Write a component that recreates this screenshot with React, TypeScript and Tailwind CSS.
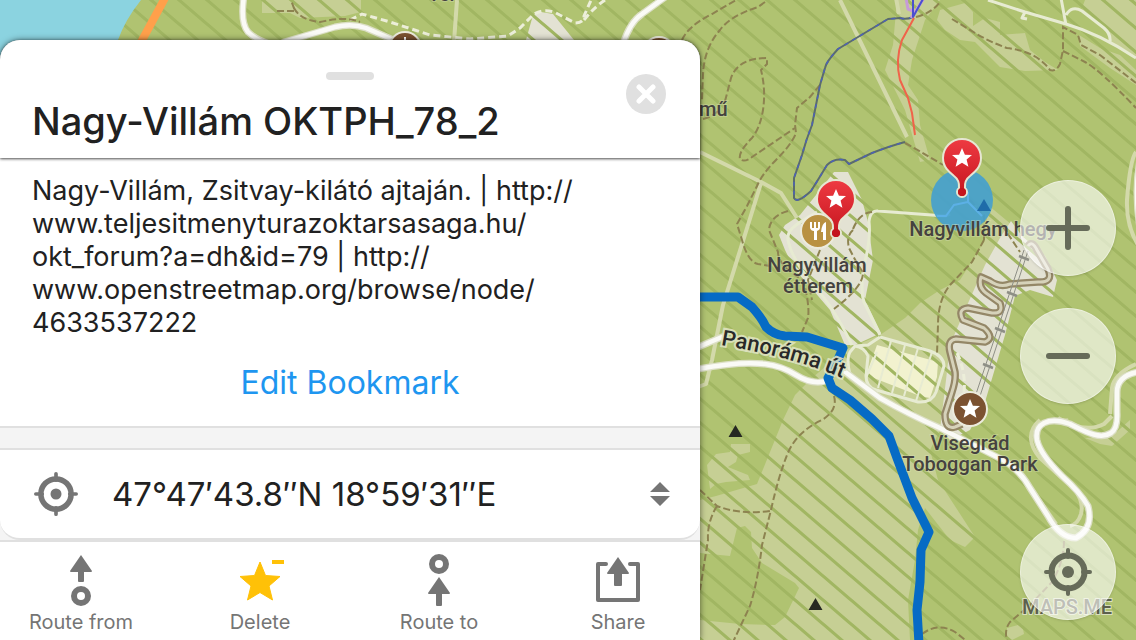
import type { ReactNode } from "react";

const STAR = "M0 -10L2.9 -3.2L10 -3L4.6 1.6L6.4 8.8L0 4.8L-6.4 8.8L-4.6 1.6L-10 -3L-2.9 -3.2Z";

const TRAIL =
  "M913 17Q906 20 900 18L888 19L838 49Q826 62 825 68L820 85L816 105L812 125Q806 140 802 155L794 178V198Q797 204 811 191Q818 180 827 165Q834 158 845 160L849 164L872 153Q890 146 905 142";

const SLIDE =
  "M1028 246Q1032 240 1037 250L1048 269Q1054 283 1038 282L1010 284Q1000 288 990 281L981 277Q978 287 986 293L1000 303Q1004 314 992 313L968 308Q957 309 963 320L984 328Q995 338 985 342L956 339Q947 340 950 352L955 372Q956 380 952 392L945 414Q945 430 955 427L962 424";

function Pin({ x, y }: { x: number; y: number }) {
  return (
    <g transform={`translate(${x} ${y})`}>
      <path
        d="M0 -19A19 19 0 0 0 -19 0C-19 9 -13 14 -8 18C-4 21 -2.5 25 -3 30A5 5 0 1 0 3 30C2.5 25 4 21 8 18C13 14 19 9 19 0A19 19 0 0 0 0 -19Z"
        fill="url(#pin)"
        stroke="#e6e6d2"
        strokeWidth="2"
      />
      <circle cy="34" r="4" fill="#c4141d" />
      <path d={STAR} fill="#fff" />
    </g>
  );
}

function MapCanvas() {
  return (
    <svg
      className="absolute inset-0 h-full w-full"
      viewBox="0 0 1136 640"
      preserveAspectRatio="xMinYMin slice"
      role="img"
      aria-label="Map of Nagy-Villám"
    >
      <defs>
        <pattern id="stripes" width="28" height="24" patternUnits="userSpaceOnUse" x="11">
          <path d="M-28 -24L56 48M-28 0L28 48M0 -24L56 24" stroke="#a1b662" strokeWidth="3.2" />
        </pattern>
        <linearGradient id="pin" x1="0" y1="0" x2="0" y2="1">
          <stop offset="0" stopColor="#ee3a42" />
          <stop offset="1" stopColor="#c4141d" />
        </linearGradient>
        <path id="street" d="M721 345C755 351 805 360 860 386" />
      </defs>
      <rect width="1136" height="640" fill="#b0c371" />

      <g fill="#c6cf94">
        <path d="M262 0H361V12L345 16L300 18L290 13L262 13Z" />
        <path d="M716 496L757 484L783 420L795 395L812 378L845 350L880 335L905 318L920 303L940 290L960 280L985 240L988 205L1012 225L990 300L950 350L945 400L940 430L930 450L938 480L975 537L965 547L950 540L925 508L918 530L915 560L908 600L910 640H700V500Z" />
        <path d="M707 465L716 454L730 452L731 444L750 444L750 452L738 455L736 462L728 467L748 475L750 480L726 482L716 484L710 489Z" />
        <path d="M940 10L965 3L973 12L973 26L985 18L1000 22V35L1025 33L1030 50L1045 62L1058 70L1025 71L1000 67L988 55L975 42L960 40L945 30L937 20Z" />
        <path d="M1085 0H1136V56L1110 42L1108 30L1082 8Z" />
        <path d="M1079 35L1100 48L1120 55L1136 70V85L1110 68L1080 46Z" />
        <path d="M897 0H940L925 20L912 60L908 85L918 100L920 125L930 160L920 162L905 110L885 70L893 45Z" />
        <path d="M1040 420L1068 418L1070 426L1050 424ZM1085 438L1112 436L1130 420V430L1112 446L1100 444Z" />
        <path d="M1007 628L1022 624L1024 634L1012 640H1007Z" />
      </g>
      <path
        d="M700 553L730 556L737 528L745 526L751 532L752 548L762 563L795 583L799 588L785 617L775 625L740 624L700 620Z"
        fill="#b0c371"
      />
      <g fill="#e3e2d3">
        <path d="M526 40L533 15L541 12L553 14L574 40Z" />
        <path d="M834 172L848 172L862 200L868 222L873 260L865 300L881 333L855 345H845L830 310L813 290L795 270L785 250L779 235L785 225L800 215L820 190Z" />
        <path d="M1011 221L1022 236L1045 256L1057 280L1053 297L1030 290L1015 296L1005 335L985 402L970 430L950 440L940 430L946 380L950 345L965 310L985 265L1000 238Z" />
      </g>
      <path d="M877 345L938 362L937 377L930 398L920 396L866 375Z" fill="#f2f2cf" />
      <rect width="1136" height="640" fill="url(#stripes)" />

      <path d="M0 0H141Q125 20 118 40L100 60H0Z" fill="#8bd3e0" />
      <path d="M165 -2L140 44" stroke="#ffa04b" strokeWidth="8" />

      <g fill="none" stroke="#d3d9aa" strokeWidth="4" strokeLinejoin="round">
        <path d="M457 0L454 42M840 0L907 137M896 -2L899 14M700 152L761 182L781 193L797 218M761 183L748 225L723 305L712 360L706 384L698 387" />
        <path d="M1136 152Q1130 160 1127 200Q1126 225 1138 245" />
        <path d="M1136 364Q1114 374 1112 388L1110 414M1040 420C1026 432 1030 446 1040 458L1075 490Q1084 502 1081 514Q1078 524 1070 526M1020 472L1038 498L1056 524M1058 418Q1085 434 1104 424L1112 416" />
      </g>
      <g fill="none" stroke="#e7ebd2" strokeWidth="3" strokeLinejoin="round">
        <path d="M988 0L1025 12L1066 24Q1100 34 1136 58M1061 -2L1066 25M1066 15Q1072 5 1082 11L1104 28Q1111 34 1110 42M1025 12L1022 18L1027 19" />
        <path d="M817 212C795 225 784 230 789 244Q793 260 815 288Q832 304 852 345M950 214L945 216L878 211Q870 210 869 222Q871 240 864 265Q860 290 864 302L880 335" />
        <path d="M880 337L930 351Q944 356 944 366L936 392Q932 403 918 402L876 390Q866 387 866 376L868 356Q864 347 855 346L850 352Q846 358 850 375M880 337L868 345L855 346" />
        <path d="M891 341L878 388M905 345L892 393M918 348L904 396M932 352L916 401M877 352L866 378" strokeWidth="2" />
      </g>

      <g fill="none" stroke="#dcdfc6" strokeWidth="7" strokeLinecap="round" strokeLinejoin="round">
        <path
          id="whiteRoads"
          d="M244 -4Q240 22 248 32Q256 40 270 44M284 42L335 27Q352 23 366 28L398 42M623 44Q630 22 642 14L664 -2M696 348L722 337M698 369Q740 361 765 364Q782 366 796 375Q812 385 826 381M840 368L880 398Q910 415 940 428L1003 460Q1020 470 1030 488L1048 516Q1060 538 1076 538Q1094 528 1088 506Q1080 492 1062 476Q1040 454 1037 440C1034 424 1048 416 1070 424C1086 432 1100 440 1111 433Q1118 428 1117 412V392Q1117 376 1138 372M1142 150Q1132 190 1142 240"
        />
        <path
          d="M244 -4Q240 22 248 32Q256 40 270 44M284 42L335 27Q352 23 366 28L398 42M623 44Q630 22 642 14L664 -2M696 348L722 337M698 369Q740 361 765 364Q782 366 796 375Q812 385 826 381M840 368L880 398Q910 415 940 428L1003 460Q1020 470 1030 488L1048 516Q1060 538 1076 538Q1094 528 1088 506Q1080 492 1062 476Q1040 454 1037 440C1034 424 1048 416 1070 424C1086 432 1100 440 1111 433Q1118 428 1117 412V392Q1117 376 1138 372M1142 150Q1132 190 1142 240"
          stroke="#fafaf6"
          strokeWidth="4.5"
        />
      </g>

      <g fill="none" stroke="#eceed9" strokeWidth="3" strokeDasharray="7 4">
        <path d="M350 20L362 14L390 22L430 35L470 39L508 36L520 28L534 14Q545 8 556 13L575 23Q584 23 584 16L592 -2M584 20Q595 6 608 -2" />
        <path d="M957 353Q966 372 964 392" />
      </g>
      <g fill="none" stroke="#8d8350" strokeWidth="2" strokeDasharray="7 3">
        <path d="M277 11H295L291 0M294 8Q300 20 320 22Q345 16 360 22M682 40Q688 26 712 14L738 -1M765 2L758 7Q730 16 720 30Q704 48 703 75L702 100" />
        <path d="M725 101Q728 90 731 78Q738 58 767 58V64L761 70Q766 90 763 110Q760 128 752 138Q738 152 740 159Q744 163 752 157L795 128M703 119Q712 117 718 111" />
        <path d="M820 85L810 97L797 108L795 125L796 133Q792 144 776 160Q762 174 757 186L747 206L737 224L742 240Q748 262 758 264L770 266M788 211Q770 216 769 230L778 252Q778 266 803 280Q810 305 808 318L802 332" />
        <path d="M853 230Q846 236 849 248Q858 266 863 272Q864 286 834 309M853 229Q860 212 873 212M820 250L808 280L812 300" />
        <path d="M952 19L975 33Q990 42 1007 48Q1024 50 1036 57Q1046 64 1050 70Q1056 72 1060 64L1063 50V27L1078 35L1081 45L1100 55L1136 83M1063 51L1085 62Q1100 70 1136 108M916 17Q932 13 940 2M905 143L916 149L943 165" />
        <path d="M984 240L972 262L950 285Q938 300 938 325L937 354M1002 225L1020 252M970 200L984 215V240" />
        <path d="M834 396Q838 410 822 420Q796 432 787 455Q778 478 771 510L762 545Q758 580 750 606L733 642M700 490L717 506Q740 515 770 511M717 506Q707 522 708 540L700 590" />
        <path d="M1064 541Q1064 562 1052 582L1030 605L1010 622Q1004 630 1007 640M922 634Q938 622 955 632L968 642" />
      </g>

      <g fill="none" strokeLinejoin="round">
        <path d={TRAIL} stroke="#5b6c6c" strokeWidth="2" />
        <path d={TRAIL} stroke="#4d62b4" strokeWidth="1.5" strokeDasharray="4 5" />
        <path d="M906 -2L908 9L915 12M911 18L924 -2" stroke="#c79bd8" strokeWidth="3" />
        <path d="M913 -2V17L923 -1" stroke="#4a4fd0" strokeWidth="2" />
        <path d="M914 18L902 40Q895 60 900 80L908 98L912 113L915 135" stroke="#f0634a" strokeWidth="2" />
      </g>

      <g fill="none" strokeLinejoin="round">
        <path d={SLIDE} stroke="#948767" strokeWidth="7.5" />
        <path d={SLIDE} stroke="#d6d2ba" strokeWidth="3" />
      </g>
      <g stroke="#8e8f86" strokeWidth="1">
        <path d="M1024 250L976 394M1028 251L980 396" />
        <path d="M1019 256L1029 260M1007 292L1017 296M995 328L1005 332M983 364L993 368" strokeWidth="2.5" />
      </g>

      <path
        d="M696 297H738L752 307Q762 318 766 327Q774 335 785 336L807 337L843 348L836 364L828 378L832 388L850 400L872 419L889 436L897 458L912 498L929 532L921 550L920 582L917 610L919 644"
        fill="none"
        stroke="#066bc5"
        strokeWidth="9"
        strokeLinejoin="round"
      />

      <circle cx="962" cy="200" r="31" fill="#45a1cd" fillOpacity="0.92" />
      <path d="M937 216H946L954 205L968 202V192M968 202L982 216" fill="none" stroke="#5cb0e6" strokeWidth="2" />
      <path d="M984 199L991 211H977Z" fill="#1f6ca9" />
      <path d="M735.5 425L742.5 437H728.500ZM815.500 598L822.500 610H808.500Z" fill="#262822" />

      <g stroke="#ecebdd" strokeWidth="2">
        <circle cx="405" cy="48" r="16" fill="#7b5231" />
        <circle cx="659" cy="53" r="16" fill="#7b5231" />
        <circle cx="818" cy="231" r="17" fill="#b99142" />
        <circle cx="970" cy="409" r="17" fill="#7b5231" />
      </g>
      <path d="M404 37H406V44H404Z" fill="#fff" />
      <path
        d="M810 222V228Q811 231 814 231V240H817V231Q820 230 820 228V222H818V228H816V222H814V228H812V222ZM826 222Q822 223 821 232H823V240H826Z"
        fill="#fff"
      />
      <path d={STAR} transform="translate(970 409)" fill="#fff" />

      <g
        fontFamily="Roboto, sans-serif"
        fontSize="20"
        fontWeight="500"
        fill="#45423f"
        stroke="#dfe3c2"
        strokeOpacity="0.35"
        strokeWidth="2"
        paintOrder="stroke"
      >
        <text x="429" y="1">ver</text>
        <text x="699" y="116">mű</text>
        <g textAnchor="middle">
          <text x="817" y="272">Nagyvillám</text>
          <text x="818" y="293">étterem</text>
          <text x="983" y="236">Nagyvillám hegy</text>
          <text x="970" y="450">Visegrád</text>
          <text x="970" y="471">Toboggan Park</text>
        </g>
        <text fontSize="22" fill="#292929" strokeOpacity="0.9" strokeWidth="4">
          <textPath href="#street">Panoráma út</textPath>
        </text>
        <text x="1022" y="614" fill="#5c604d" stroke="#e6e9d6" strokeOpacity="0.8">
          MAPS.ME
        </text>
      </g>
      <Pin x={836} y={199} />
      <Pin x={962} y={158} />
    </svg>
  );
}

function RoundButton({ label, className = "", children }: { label: string; className?: string; children: ReactNode }) {
  return (
    <button
      type="button"
      aria-label={label}
      className={`flex size-24 items-center justify-center rounded-full border border-white/40 bg-white/60 shadow-sm ${className}`}
    >
      {children}
    </button>
  );
}

function Target({ className }: { className: string }) {
  return (
    <svg viewBox="0 0 48 48" className={className} fill="none" stroke="currentColor" aria-hidden="true">
      <circle cx="24" cy="24" r="16.500" strokeWidth="6" />
      <circle cx="24" cy="24" r="6" fill="currentColor" stroke="none" />
      <path d="M24 2V9M24 39V46M2 24H9M39 24H46" strokeWidth="4" strokeLinecap="round" />
    </svg>
  );
}

function Action({ label, children }: { label: string; children: ReactNode }) {
  return (
    <button type="button" className="flex w-[146px] flex-col items-center gap-1">
      <svg viewBox="0 0 52 52" className="size-13" aria-hidden="true">
        {children}
      </svg>
      <span className="text-[20px] leading-6 whitespace-nowrap">{label}</span>
    </button>
  );
}

export default function App() {
  return (
    <main className="relative flex min-h-screen flex-col justify-end overflow-hidden font-['Inter',sans-serif] text-[#212121]">
      <MapCanvas />

      <section
        aria-label="Bookmark"
        className="relative w-[700px] max-w-full rounded-t-[20px] bg-[#f4f4f4] shadow-[0_0_6px_rgba(0,0,0,0.55)]"
      >
        <header className="relative flex flex-col rounded-t-[20px] bg-white px-8 pt-8 pb-3 shadow-[0_1px_3px_rgba(0,0,0,0.7)]">
          <span className="h-2 w-12 self-center rounded-full bg-[#e0e0e0]" />
          <div className="flex items-start justify-between">
            <h1 className="pt-4 text-[38px] leading-[50px] font-medium">Nagy-Villám OKTPH_78_2</h1>
            <button
              type="button"
              aria-label="Close"
              className="-mt-1.5 mr-0.5 flex size-10 items-center justify-center rounded-full bg-[#e0e0e0]"
            >
              <svg viewBox="0 0 20 20" className="size-5" aria-hidden="true">
                <path d="M3 3L17 17M17 3L3 17" stroke="#fff" strokeWidth="5" strokeLinecap="round" />
              </svg>
            </button>
          </div>
        </header>

        <div className="flex flex-col border-b-2 border-[#e0e0e0] bg-white px-8 pt-4 pb-6">
          <p className="text-[27px] leading-[33px]">
            Nagy-Villám, Zsitvay-kilátó ajtaján. |{" "}
            <a href="http://www.teljesitmenyturazoktarsasaga.hu/okt_forum?a=dh&id=79">
              http://
              <br />
              www.teljesitmenyturazoktarsasaga.hu/
              <br />
              okt_forum?a=dh&amp;id=79
            </a>{" "}
            |{" "}
            <a href="http://www.openstreetmap.org/browse/node/4633537222">
              http://
              <br />
              www.openstreetmap.org/browse/node/
              <br />
              4633537222
            </a>
          </p>
          <button type="button" className="mt-6 self-center text-[32px] leading-[39px] text-[#1e96f0]">
            Edit Bookmark
          </button>
        </div>

        <div className="mt-5 rounded-b-[20px] border-y-2 border-[#e0e0e0] bg-white">
          <button type="button" className="flex h-22 w-full items-center pr-7.5 pl-8.5">
            <Target className="size-11 text-[#757575]" />
            <span className="ml-8.5 text-[33px] leading-10">47°47′43.8″N 18°59′31″E</span>
            <svg viewBox="0 0 20 24" className="ml-auto h-6 w-5 text-[#757575]" aria-hidden="true">
              <path d="M10 0L20 10H0ZM10 24L20 14H0Z" fill="currentColor" />
            </svg>
          </button>
        </div>

        <nav className="flex justify-between border-t-2 border-[#e0e0e0] bg-white pt-3 pr-[9px] pb-1.5 pl-2 text-[#757575]">
          <Action label="Route from">
            <path d="M26 1L37 17Q37 18 36 18H29V27Q29 28 28 28H24Q23 28 23 27V18H16Q15 18 15 17Z" fill="currentColor" />
            <circle cx="26" cy="42" r="7" fill="none" stroke="currentColor" strokeWidth="6" />
          </Action>
          <Action label="Delete">
            <path
              d="M26 8L31.500 21.500L46 22.500L35 32L38.500 46L26 38.500L13.500 46L17 32L6 22.500L20.500 21.500Z"
              fill="#ffc107"
              stroke="#ffc107"
              strokeLinejoin="round"
            />
            <path d="M38 6H50V10H38Z" fill="#ffc107" />
          </Action>
          <Action label="Route to">
            <circle cx="26" cy="10" r="7" fill="none" stroke="currentColor" strokeWidth="6" />
            <path d="M26 23L37 39Q37 40 36 40H29V51Q29 52 28 52H24Q23 52 23 51V40H16Q15 40 15 39Z" fill="currentColor" />
          </Action>
          <Action label="Share">
            <path
              d="M14 10H6V46H46V10H38"
              fill="none"
              stroke="currentColor"
              strokeWidth="4"
              strokeLinecap="round"
              strokeLinejoin="round"
            />
            <path d="M26 3L37 19Q37 20 36 20H30V31Q30 32 29 32H23Q22 32 22 31V20H16Q15 20 15 19Z" fill="currentColor" />
          </Action>
        </nav>
      </section>

      <div className="absolute top-45 right-5 bottom-5 flex flex-col gap-8 text-[#666b59]">
        <RoundButton label="Zoom in">
          <svg viewBox="0 0 44 44" className="size-11" aria-hidden="true">
            <path d="M22 3V41M3 22H41" stroke="currentColor" strokeWidth="6" strokeLinecap="round" />
          </svg>
        </RoundButton>
        <RoundButton label="Zoom out">
          <svg viewBox="0 0 44 44" className="size-11" aria-hidden="true">
            <path d="M3 22H41" stroke="currentColor" strokeWidth="6" strokeLinecap="round" />
          </svg>
        </RoundButton>
        <RoundButton label="My location" className="mt-auto">
          <Target className="size-12" />
        </RoundButton>
      </div>
    </main>
  );
}
